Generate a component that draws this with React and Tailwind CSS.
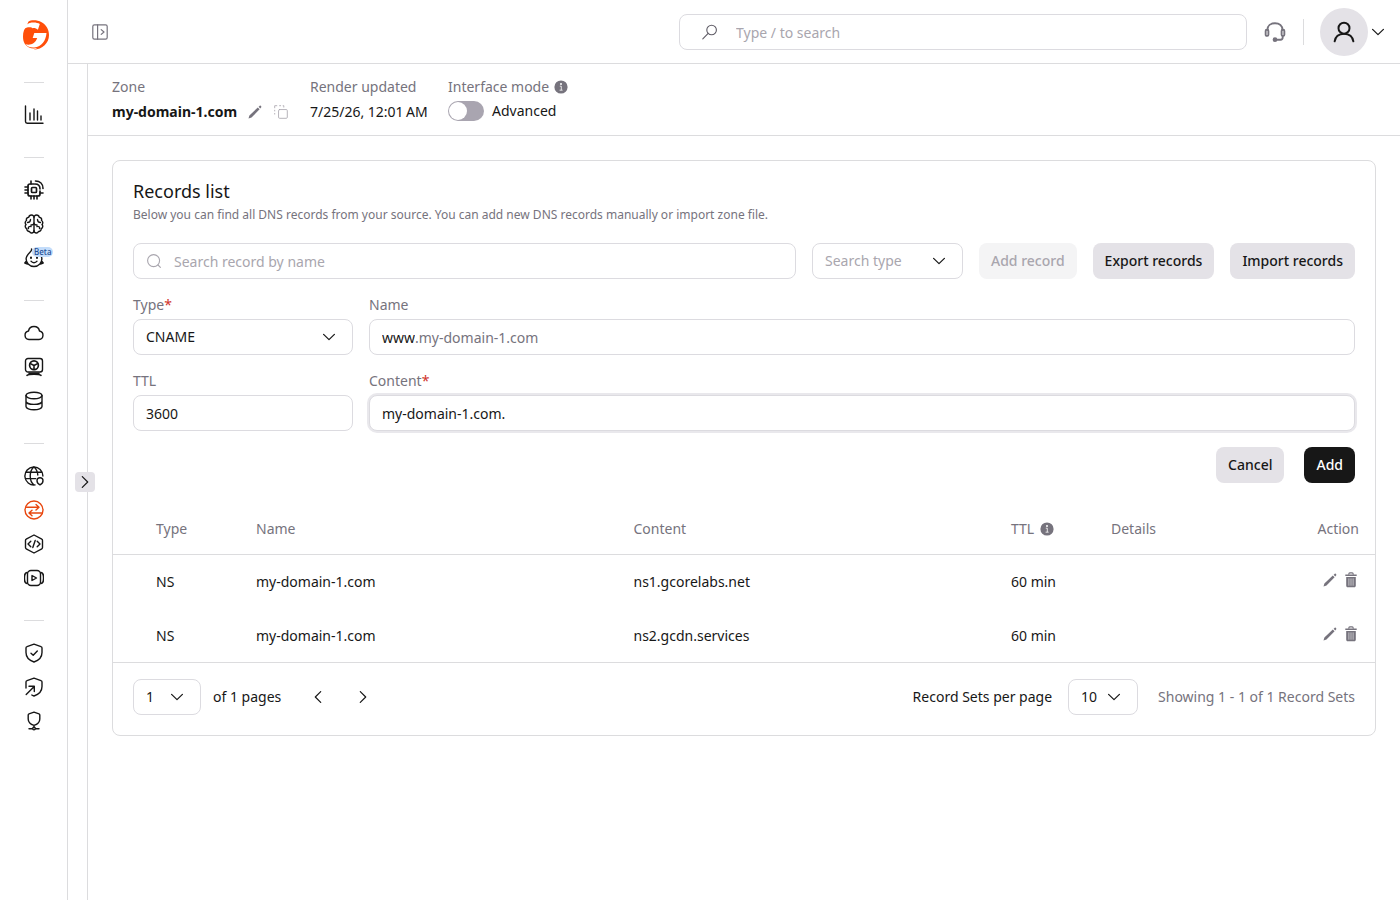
import React, { useState } from 'react';
import clsx from 'clsx';

const Icon = ({ size = 20, className, children, ...rest }) => (
  <svg
    width={size}
    height={size}
    viewBox="0 0 20 20"
    fill="none"
    stroke="currentColor"
    strokeWidth="1.4"
    strokeLinecap="round"
    strokeLinejoin="round"
    className={clsx('shrink-0', className)}
    aria-hidden="true"
    {...rest}
  >
    {children}
  </svg>
);

const Chevron = ({ className }) => (
  <Icon size={12} className={className} strokeWidth="2">
    <path d="M1 5.500l9 9 9-9" />
  </Icon>
);

const Info = () => (
  <svg width="14" height="14" viewBox="0 0 14 14" className="shrink-0 text-[#76737d]" aria-hidden="true">
    <circle cx="7" cy="7" r="6.600" fill="currentColor" />
    <circle cx="7" cy="4" r="1" fill="#fff" />
    <path d="M5.800 6.200H7.300V10M5.600 10.200h3" stroke="#fff" strokeWidth=".8" fill="none" />
  </svg>
);

const Pencil = () => (
  <svg width="14" height="14" viewBox="0 0 14 14" fill="currentColor" className="shrink-0" aria-hidden="true">
    <path d="M.5 13.500l.9-3 8.400-8.100 1.800 1.800-8.100 8.400zM10.600 1.800l1-.9c.4-.4.800-.4 1.200 0l.3.300c.4.400.4.800 0 1.200l-.9 1z" />
  </svg>
);

const Trash = () => (
  <svg width="12" height="16" viewBox="0 0 12 16" fill="none" className="shrink-0" aria-hidden="true">
    <path d="M3.800 2.800V1.900c0-.6.4-1 1-1h2.400c.6 0 1 .4 1 1v.9" stroke="currentColor" strokeWidth="1.100" />
    <path d="M.3 2.600h11.400v1.500H.3zM1.200 5h9.600v8.800c0 .9-.6 1.500-1.500 1.500H2.700c-.9 0-1.500-.6-1.500-1.500z" fill="currentColor" />
    <path d="M3.900 6.400v7.300M6 6.400v7.300M8.100 6.400v7.300" stroke="#fff" strokeWidth=".6" />
  </svg>
);

const Logo = () => (
  <svg width="26" height="30" viewBox="0 0 26 30" aria-hidden="true">
    <path
      d="M5.300 1.800C8-.1 13.800-.3 18.600 2.300 23.200 4.800 26 9.500 26 15c0 8-6.500 14.500-15.500 14.700 1.500-.4 2.800-.9 4-1.600-5.500 1.400-10.300-.4-12.600-4C.5 21.800 0 19.200 0 16.500 0 12 1.300 8.700 3.800 5.800z"
      fill="#ff4f0a"
    />
    <path
      d="M.3 9.500C2.200 5.300 5 3.200 8.500 2.600c3-.5 6 0 8.300 1.300L14.900 9.700c-1.700-1.400-3.600-2-5.500-1.500-.6-1-5.400-1.800-9.100 1.300zM11.300 13h12.200c-.6 7.600-4.700 13.800-12.300 14.500-3.500.3-6.700-.9-8.700-3.200 5.300 1.200 9.900-.8 11.700-6.200H9.700z"
      fill="#fff"
    />
  </svg>
);

const navGroups = [
  [
    {
      label: 'Statistics',
      icon: <path d="M1.500 1v15.500c0 1 .7 1.700 1.700 1.700H19M6 15V8M10 15V4M13.500 15V6M17 15v-4" />,
    },
  ],
  [
    {
      label: 'Edge Cloud',
      icon: (
        <>
          <path d="M10 4H6a2 2 0 0 0-2 2v8a2 2 0 0 0 2 2h8a2 2 0 0 0 2-2v-3" strokeWidth="1.700" />
          <rect x="7.500" y="7.500" width="5" height="5" rx="1" strokeWidth="1.700" />
          <path d="M7 1v3M7 16v3M10 16v3M13 16v3M1 7h3M1 10h3M1 13h3M16 13h3M11 4c3 0 5 2 5 5M11.500 1C16 1 19 4 19 8.500" strokeWidth="1.600" />
        </>
      ),
    },
    {
      label: 'Inference',
      icon: (
        <>
          <path d="M10 3.500C10 2 9 1 7.500 1S5 2 4.800 3.200C3 3.300 2 4.800 2.500 6.500 1 7.300.8 9.300 2 10.500c-1.200 1.300-.9 3.500.8 4.200C2.700 16.500 4 17.700 5.500 17.500 6 18.600 7 19.200 8 19c1.300-.2 2-1.200 2-2.500V3.500z" />
          <path d="M10 3.500C10 2 11 1 12.500 1S15 2 15.200 3.200c1.800.1 2.800 1.600 2.300 3.300 1.500.8 1.700 2.800.5 4 1.200 1.300.9 3.500-.8 4.200.1 1.800-1.200 3-2.700 2.800-.5 1.100-1.500 1.700-2.500 1.500-1.300-.2-2-1.200-2-2.500M6.500 5.500c0 2-1.500 3-3 3M13.500 5.500c0 2 1.500 3 3 3M7 12.500c-1.500-.5-3 .5-2.500 2M13 12.500c1.500-.5 3 .5 2.500 2M7 11c1.500 0 3-.5 3-2 0 1.500 1.500 2 3 2" />
        </>
      ),
    },
    {
      label: 'AI assistant',
      badge: 'Beta',
      icon: (
        <>
          <path d="M7.500 1c1.500 2-4.500 4.500-5.300 9-.5 4.800 3 8.500 7.800 8.500s8.300-3.700 7.800-8.500C17.500 8 16.500 6.500 15.500 5.500M2 13.500L.8 15l2.700 1M18 13.500l1.200 1.500-2.700 1M7 13.200c1.500 2 4.500 2 6 0" />
          <path d="M7 9.500v.5M13 9.500v.5" strokeWidth="2" />
        </>
      ),
    },
  ],
  [
    {
      label: 'Cloud',
      icon: <path d="M5 16.500a4.300 4.300 0 0 1-.5-8.500C5 5.300 7.200 3.500 10 3.500S15 5.300 15.500 8a4.300 4.300 0 0 1-.5 8.500z" />,
    },
    {
      label: 'Bare Metal',
      icon: (
        <>
          <rect x="1.500" y="1.500" width="17" height="13.500" rx="2.500" />
          <circle cx="10" cy="8.200" r="4.400" strokeWidth="1.700" />
          <path d="M10 12.500V8.500L6.500 6.600M10 8.500l3.500-1.900M3 18.300c2-1.500 12-1.500 14 0M5 16.300h10" strokeWidth="1.600" />
        </>
      ),
    },
    {
      label: 'Databases',
      icon: (
        <>
          <ellipse cx="10" cy="4.500" rx="8" ry="3.300" />
          <path d="M2 4.500v11c0 1.800 3.500 3.300 8 3.300s8-1.500 8-3.300v-11M2 10.200c0 1.800 3.500 3.200 8 3.200s8-1.400 8-3.200" />
        </>
      ),
    },
  ],
  [
    {
      label: 'CDN',
      icon: (
        <>
          <path d="M11 18.900A9 9 0 1 1 18.900 10M2.300 6.300h15.400M1.200 12.600h10.500M10 1c-2.500 2-3.800 5.300-3.800 9s1.300 7 3.800 9M10 1c2.300 1.900 3.600 4.600 3.800 8" />
          <path d="M16 18.800s-3-1.600-3-4.100a3 3 0 0 1 6 0c0 2.500-3 4.100-3 4.100z" />
        </>
      ),
    },
    {
      label: 'DNS',
      active: true,
      icon: (
        <>
          <circle cx="10" cy="10" r="9" />
          <path d="M2.500 7.300h12M12 4.600l3 2.700-3 2.700M17.500 13h-12M8 10.300L5 13l3 2.700" />
        </>
      ),
    },
    {
      label: 'FastEdge',
      icon: <path d="M10 1l7.800 4.200c.6.300.7.700.7 1.200v7.200c0 .5-.1.900-.7 1.200L10 19l-7.800-4.200c-.6-.3-.7-.7-.7-1.200V6.400c0-.5.100-.9.700-1.200zM6.800 7.200L4 10l2.800 2.800M13.200 7.200L16 10l-2.800 2.800M11.200 6.500L8.800 13.500" />,
    },
    {
      label: 'Streaming',
      icon: (
        <>
          <rect x="3.500" y="2.500" width="13" height="15" rx="3.500" />
          <path d="M3 4.500C.5 5 .5 7 .5 10s0 5 2.500 5.500M17 4.500c2.500.5 2.500 2.500 2.500 5.500s0 5-2.500 5.500M8 7.500v5l4.500-2.500z" />
        </>
      ),
    },
  ],
  [
    {
      label: 'WAAP',
      icon: <path d="M10 1.200l7 2.400c.7.200 1 .6 1 1.300V9.500c0 4.500-3.500 8-8 9.500-4.500-1.500-8-5-8-9.500V4.900c0-.7.300-1.100 1-1.300zM7 10.300l2.200 2L13.300 8" />,
    },
    {
      label: 'DDoS protection',
      icon: <path d="M2 11V4.900c0-.7.300-1.100 1-1.300l7-2.400 7 2.400c.7.200 1 .6 1 1.300V9.500c0 4.500-3.500 8-8 9.500-.8-.2-1.500-.6-2.200-1M2.200 17.500l8-8M5 9.200h5.300v5.300" />,
    },
    {
      label: 'Network protection',
      icon: (
        <>
          <path d="M10 1.200l5 1.700c.6.200.8.500.8 1v4c0 3.200-2.400 5.400-5.800 6.500-3.400-1.100-5.800-3.300-5.800-6.500v-4c0-.5.200-.8.800-1zM10 14.500v1.500M5 17.700h3.300M11.700 17.700H15" />
          <circle cx="10" cy="17.600" r="1.300" />
        </>
      ),
    },
  ],
];

const records = [
  { type: 'NS', name: 'my-domain-1.com', content: 'ns1.gcorelabs.net', ttl: '60 min' },
  { type: 'NS', name: 'my-domain-1.com', content: 'ns2.gcdn.services', ttl: '60 min' },
];

const fieldBox = 'h-9 w-full rounded-lg border border-[#dcdbe0] bg-white px-3 outline-none placeholder:text-[#a9a6ae]';

const Select = ({ id, label, options, className, value, muted }) => (
  <div className={clsx('relative', className)}>
    <select
      id={id}
      aria-label={label}
      defaultValue={value}
      className={clsx(fieldBox, 'appearance-none', muted && 'text-[#a9a6ae]')}
    >
      {options.map((o) => (
        <option key={o}>{o}</option>
      ))}
    </select>
    <Chevron className="pointer-events-none absolute top-3 right-[18px]" />
  </div>
);

const Button = ({ variant = 'secondary', children, ...rest }) => (
  <button
    type="button"
    className={clsx(
      'h-9 shrink-0 rounded-lg px-3 font-medium whitespace-nowrap',
      variant === 'secondary' && 'bg-[#e4e2e7] text-[#171717]',
      variant === 'primary' && 'bg-[#171717] text-white',
      variant === 'disabled' && 'bg-[#f4f4f5] text-[#a9a6ae]'
    )}
    {...rest}
  >
    {children}
  </button>
);

const Sidebar = () => (
  <aside className="w-[68px] shrink-0 border-r border-[#dcdcde]">
    <a href="#home" aria-label="Home" className="flex h-[82px] items-start justify-center pt-5 pl-1">
      <Logo />
    </a>
    <nav>
      {navGroups.map((group, i) => (
        <div key={i} className="flex flex-col items-center pb-[25px]">
          <hr className="mb-[15px] w-5 border-[#dcdcde]" />
          {group.map((item) => (
            <a
              key={item.label}
              href={`#${item.label}`}
              aria-label={item.label}
              className={clsx('relative flex h-[34px] w-full items-center justify-center', item.active && 'text-[#e8470f]')}
            >
              <Icon>{item.icon}</Icon>
              {item.badge && (
                <span className="absolute top-[6px] left-8 rounded-full bg-[#c3dcfa] px-0.5 text-[8px] leading-[10px] font-medium text-[#1f4f94]">
                  {item.badge}
                </span>
              )}
            </a>
          ))}
        </div>
      ))}
    </nav>
  </aside>
);

const TopBar = () => (
  <header className="flex h-16 items-center justify-between border-b border-[#dcdcde] pr-4 pl-6">
    <button type="button" aria-label="Toggle menu" className="text-[#76737d]">
      <Icon size={16} strokeWidth="1.500">
        <rect x="1" y="1" width="18" height="18" rx="2" />
        <path d="M7 1v18M11.500 7l3.500 3-3.500 3" />
      </Icon>
    </button>
    <div className="flex items-center">
      <label className="flex h-9 w-[568px] items-center rounded-lg border border-[#dcdbe0] pl-[22px]">
        <Icon size={16} className="text-[#5f5c66]">
          <circle cx="12" cy="7.500" r="6" />
          <path d="M7.700 11.800L1 18.500" />
        </Icon>
        <input
          type="search"
          aria-label="Search"
          placeholder="Type / to search"
          className="ml-[18px] w-full pt-0.5 outline-none placeholder:text-[#a9a6ae]"
        />
      </label>
      <button type="button" aria-label="Support" className="mr-[17px] ml-[17px] text-[#76737d]">
        <Icon size={22} strokeWidth="1.700">
          <path d="M3.200 8C3.200 4.300 6 2 10 2s6.800 2.300 6.800 6M17 13.500v1.500c0 1.300-.8 2-2 2h-4" />
          <rect x="1.500" y="8" width="2.500" height="5.500" rx="1" />
          <rect x="16" y="8" width="2.500" height="5.500" rx="1" />
          <circle cx="10" cy="17" r="1.300" fill="currentColor" />
        </Icon>
      </button>
      <span className="mr-4 h-[26px] w-px bg-[#dcdcde]" />
      <button type="button" aria-label="Account" className="flex items-center gap-1">
        <span className="flex size-12 items-center justify-center rounded-full bg-[#e4e2e7]">
          <Icon size={22} strokeWidth="1.800">
            <circle cx="10" cy="6.500" r="5" />
            <path d="M1.500 18.500c.6-4 3.300-6.800 8.500-6.800s7.900 2.800 8.500 6.800" />
          </Icon>
        </span>
        <Chevron />
      </button>
    </div>
  </header>
);

const ZoneBar = () => {
  const [advanced, setAdvanced] = useState(false);

  return (
    <div className="flex h-[72px] border-b border-[#dcdcde] px-6 pt-3">
      <div className="w-[198px]">
        <p className="leading-[22px] text-[#76737d]">Zone</p>
        <div className="flex items-center leading-7">
          <span className="font-bold">my-domain-1.com</span>
          <button type="button" aria-label="Edit zone" className="ml-[11px] text-[#76737d]">
            <Pencil />
          </button>
          <button type="button" aria-label="Copy zone" className="ml-3 text-[#a9a6ae]">
            <Icon size={14} strokeWidth="1.200">
              <rect x="6.500" y="6.500" width="12.500" height="12.500" rx="1.500" />
              <path d="M1 13v-1M1 8.500V7.500M1 4V1h3M8 1h1.500M13 1h1v2" />
            </Icon>
          </button>
        </div>
      </div>
      <div className="w-[138px]">
        <p className="leading-[22px] text-[#76737d]">Render updated</p>
        <p className="leading-7">7/25/26, 12:01{'\u202f'}AM</p>
      </div>
      <div>
        <div className="flex items-center gap-[5px] leading-[22px] text-[#76737d]">
          Interface mode <Info />
        </div>
        <label className="flex items-center gap-2 leading-[26px]">
          <input
            type="checkbox"
            checked={advanced}
            onChange={(e) => setAdvanced(e.target.checked)}
            className="h-5 w-9 appearance-none rounded-full bg-[#a9a5b0] p-px before:block before:size-[18px] before:rounded-full before:bg-white checked:bg-[#171717] checked:before:translate-x-4"
          />
          Advanced
        </label>
      </div>
    </div>
  );
};

const RecordForm = () => (
  <form className="mt-4" onSubmit={(e) => e.preventDefault()}>
    <div className="grid grid-cols-[220px_1fr] gap-4">
      <div>
        <label htmlFor="type" className="block pb-1 text-[#76737d]">
          Type<span className="text-[#d0342c]">*</span>
        </label>
        <Select id="type" options={['CNAME', 'A', 'AAAA', 'MX', 'NS', 'TXT']} value="CNAME" />
      </div>
      <div>
        <label htmlFor="name" className="block pb-1 text-[#76737d]">Name</label>
        <div className={clsx(fieldBox, 'flex items-center pt-0.5')}>
          <input id="name" defaultValue="www" className="[field-sizing:content] outline-none" />
          <span className="text-[#76737d]">.my-domain-1.com</span>
        </div>
      </div>
      <div>
        <label htmlFor="ttl" className="block pb-1 text-[#76737d]">TTL</label>
        <input id="ttl" defaultValue="3600" className={fieldBox} />
      </div>
      <div>
        <label htmlFor="content" className="block pb-1 text-[#76737d]">
          Content<span className="text-[#d0342c]">*</span>
        </label>
        <input id="content" defaultValue="my-domain-1.com." className={clsx(fieldBox, 'ring-2 ring-[#e9e8ec]')} />
      </div>
    </div>
    <div className="mt-4 flex justify-end gap-5">
      <Button>Cancel</Button>
      <Button variant="primary">Add</Button>
    </div>
  </form>
);

const RecordsTable = () => (
  <table className="mt-5 w-full table-fixed text-left">
    <colgroup>
      <col className="w-[143px]" />
      <col />
      <col />
      <col className="w-[100px]" />
      <col className="w-[200px]" />
      <col className="w-16" />
    </colgroup>
    <thead>
      <tr className="h-[51px] border-b border-[#dcdcde] text-[#76737d]">
        <th className="pt-0.5 pl-[43px] font-normal">Type</th>
        <th className="pt-0.5 font-normal">Name</th>
        <th className="pt-0.5 font-normal">Content</th>
        <th className="pt-0.5 font-normal">
          <span className="flex items-center gap-[6px]">
            TTL <Info />
          </span>
        </th>
        <th className="pt-0.5 font-normal">Details</th>
        <th className="pt-0.5 pr-4 text-right font-normal">Action</th>
      </tr>
    </thead>
    <tbody className="border-b border-[#dcdcde]">
      {records.map((r) => (
        <tr key={r.content} className="h-[54px]">
          <td className="pt-0.5 pl-[43px]">{r.type}</td>
          <td className="pt-0.5">{r.name}</td>
          <td className="pt-0.5">{r.content}</td>
          <td className="pt-0.5">{r.ttl}</td>
          <td />
          <td className="pr-[18px] pb-0.5">
            <div className="flex items-center justify-end gap-2 text-[#76737d]">
              <button type="button" aria-label="Edit record">
                <Pencil />
              </button>
              <button type="button" aria-label="Delete record">
                <Trash />
              </button>
            </div>
          </td>
        </tr>
      ))}
    </tbody>
  </table>
);

const Pagination = () => (
  <div className="flex items-center px-5 pt-4 pb-5">
    <Select label="Page" options={['1']} className="w-[68px]" />
    <span className="ml-3">of 1 pages</span>
    <button type="button" aria-label="Previous page" className="ml-[31px]">
      <Chevron className="rotate-90" />
    </button>
    <button type="button" aria-label="Next page" className="ml-[33px]">
      <Chevron className="-rotate-90" />
    </button>
    <label htmlFor="per-page" className="mr-4 ml-auto">Record Sets per page</label>
    <Select id="per-page" options={['10', '25', '50']} className="w-[70px]" />
    <span className="ml-5 text-[#76737d]">Showing 1 - 1 of 1 Record Sets</span>
  </div>
);

export default function App() {
  return (
    <div className="flex min-h-screen bg-white font-['Noto_Sans',sans-serif] text-sm text-[#171717]">
      <Sidebar />
      <div className="flex min-w-0 flex-1 flex-col">
        <TopBar />
        <div className="flex flex-1">
          <div className="relative w-5 shrink-0 border-r border-[#dcdcde]">
            <button
              type="button"
              aria-label="Expand panel"
              className="absolute top-1/2 -right-2 flex size-5 -translate-y-1/2 items-center justify-center rounded bg-[#e4e2e7]"
            >
              <Chevron className="-rotate-90" />
            </button>
          </div>
          <main className="min-w-0 flex-1">
            <ZoneBar />
            <section className="m-6 rounded-lg border border-[#dcdcde]">
              <div className="px-5 pt-4">
                <h1 className="text-lg">Records list</h1>
                <p className="text-xs leading-5 text-[#76737d]">
                  Below you can find all DNS records from your source. You can add new DNS records manually or import zone file.
                </p>
                <div className="mt-[18px] flex gap-4">
                  <label className={clsx(fieldBox, 'flex min-w-0 flex-1 items-center')}>
                    <Icon size={16} className="text-[#a9a6ae]">
                      <circle cx="9.500" cy="9.500" r="7.500" />
                      <path d="M15 15l3 3" />
                    </Icon>
                    <input
                      type="search"
                      aria-label="Search record by name"
                      placeholder="Search record by name"
                      className="ml-3 w-full pt-0.5 outline-none placeholder:text-[#a9a6ae]"
                    />
                  </label>
                  <Select
                    label="Search type"
                    options={['Search type', 'A', 'CNAME', 'NS']}
                    className="w-[151px] shrink-0"
                    muted
                  />
                  <Button variant="disabled" disabled>Add record</Button>
                  <Button>Export records</Button>
                  <Button>Import records</Button>
                </div>
                <RecordForm />
              </div>
              <RecordsTable />
              <Pagination />
            </section>
          </main>
        </div>
      </div>
    </div>
  );
}
